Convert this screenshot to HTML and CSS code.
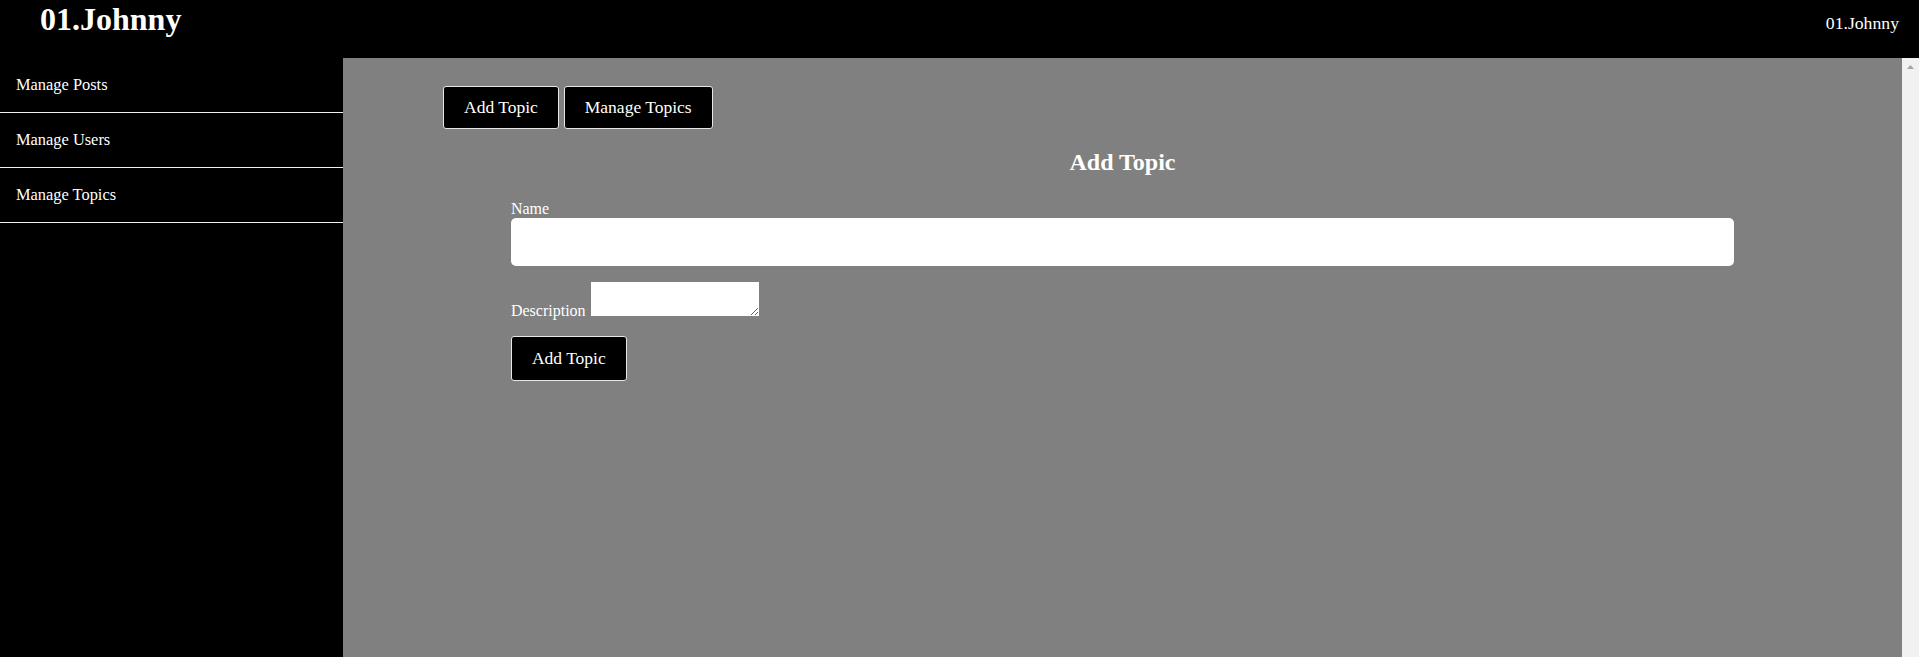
FILE: index.html
```html
<!DOCTYPE html>
<html lang="en">
<head>
<meta charset="utf-8">
<title>Add Topic</title>
<link rel="stylesheet" href="styles.css">
</head>
<body>
<header class="topbar">
  <h1 class="brand">01.Johnny</h1>
  <div class="user">01.Johnny</div>
</header>
<div class="layout">
  <nav class="sidebar">
    <a class="nav-item" href="#">Manage Posts</a>
    <a class="nav-item" href="#">Manage Users</a>
    <a class="nav-item" href="#">Manage Topics</a>
  </nav>
  <main class="main">
    <div class="actions">
      <button class="btn" type="button">Add Topic</button>
      <button class="btn" type="button">Manage Topics</button>
    </div>
    <h2 class="title">Add Topic</h2>
    <form class="form">
      <div class="group">
        <label class="label-block" for="name">Name</label>
        <input class="text-input" id="name" type="text">
      </div>
      <div class="group inline-group">
        <label for="desc">Description</label> <textarea class="desc" id="desc"></textarea>
      </div>
      <button class="btn submit" type="button">Add Topic</button>
    </form>
  </main>
  <div class="scrollbar">
    <svg class="arrow" width="17" height="17" viewBox="0 0 17 17"><polygon points="5,11 8.5,7 12,11" fill="#a3a3a3"/></svg>
  </div>
</div>
</body>
</html>
```

FILE: styles.css
```css
html, body {
  margin: 0;
  padding: 0;
  height: 100%;
  overflow: hidden;
}
body {
  font-family: "Liberation Serif", "Times New Roman", serif;
  background: #000;
  color: #fff;
  display: flex;
  flex-direction: column;
}
.topbar {
  height: 58px;
  flex: 0 0 58px;
  background: #000;
  display: flex;
  justify-content: space-between;
  align-items: flex-start;
}
.brand {
  margin: 0;
  padding: 1px 0 0 40px;
  font-size: 32px;
  line-height: 37px;
  font-weight: bold;
}
.user {
  padding: 13px 20px 0 0;
  font-size: 17.7px;
  line-height: 20px;
}
.layout {
  flex: 1;
  display: flex;
  min-height: 0;
}
.sidebar {
  width: 343px;
  flex: 0 0 343px;
  background: #000;
  display: flex;
  flex-direction: column;
}
.nav-item {
  display: block;
  padding: 17px 16px;
  font-size: 16.4px;
  line-height: 20px;
  color: #fff;
  text-decoration: none;
  border-bottom: 1px solid #f0f0f0;
}
.main {
  flex: 1;
  background: #808080;
  padding: 28px 100px 0;
  min-width: 0;
}
.actions {
  display: flex;
  gap: 5px;
}
.btn {
  font-family: "Liberation Serif", "Times New Roman", serif;
  font-size: 17.5px;
  line-height: 19px;
  padding: 11px 20px;
  background: #000;
  color: #fff;
  border: 1px solid #e6e6e6;
  border-radius: 3px;
  margin: 0;
}
.title {
  margin: 20px 0 0;
  text-align: center;
  font-size: 24px;
  line-height: 26px;
  font-weight: bold;
}
.form {
  width: 90%;
  margin: 24px auto 0;
  font-size: 16px;
  line-height: 19px;
}
.group {
  margin-bottom: 16px;
}
.label-block {
  display: block;
}
.text-input {
  display: block;
  box-sizing: border-box;
  width: 100%;
  height: 48px;
  border: none;
  border-radius: 5px;
  background: #fff;
  margin: 0;
  padding: 0 10px;
}
.desc {
  box-sizing: border-box;
  width: 168px;
  height: 34px;
  margin: 0 0 0 1px;
  border: none;
  background: #fff;
  vertical-align: baseline;
}
.submit {
  padding: 12px 20px;
}
.scrollbar {
  width: 17px;
  flex: 0 0 17px;
  background: #f1f1f1;
}
.arrow {
  display: block;
}
```
